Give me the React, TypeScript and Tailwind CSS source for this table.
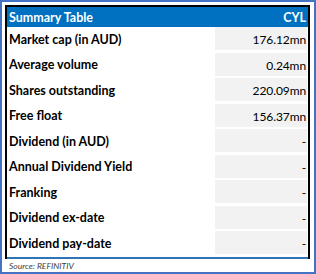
const ROWS: [string, string][] = [
  ["Market cap (in AUD)", "176.12mn"],
  ["Average volume", "0.24mn"],
  ["Shares outstanding", "220.09mn"],
  ["Free float", "156.37mn"],
  ["Dividend (in AUD)", "-"],
  ["Annual Dividend Yield", "-"],
  ["Franking", "-"],
  ["Dividend ex-date", "-"],
  ["Dividend pay-date", "-"],
];

export default function App() {
  return (
    <div className="w-[316px] h-[274px] border-2 border-[#4472c4] bg-white px-[3px] pt-[3px] font-['Lato',sans-serif]">
      <div className="w-[305px] border-2 border-b-0 border-black">
        <div className="h-[20px] bg-[#0070c0] flex items-end justify-between pl-[2px] pr-[2px] pb-[3px] text-white text-[12.5px] font-bold leading-none">
          <span>Summary Table</span>
          <span>CYL</span>
        </div>
        {ROWS.map(([label, value]) => (
          <div key={label} className="h-[25.5px] flex">
            <div className="flex-1 h-[23px] flex items-end pl-[2px] pb-[4px] text-[12.5px] font-bold text-black leading-none">
              {label}
            </div>
            <div className="w-[92px] h-[23px] mr-[1px] bg-[#f2f2f2] flex items-end justify-end pr-[1px] pb-[4px] text-[12px] text-black leading-none tracking-[-0.1px]">
              {value}
            </div>
          </div>
        ))}
        <div className="h-[2px] bg-[#2e75b6]" />
      </div>
      <div className="pl-[4px] pt-[3px] text-[8.5px] italic text-[#404040] leading-none">
        Source: REFINITIV
      </div>
    </div>
  );
}
